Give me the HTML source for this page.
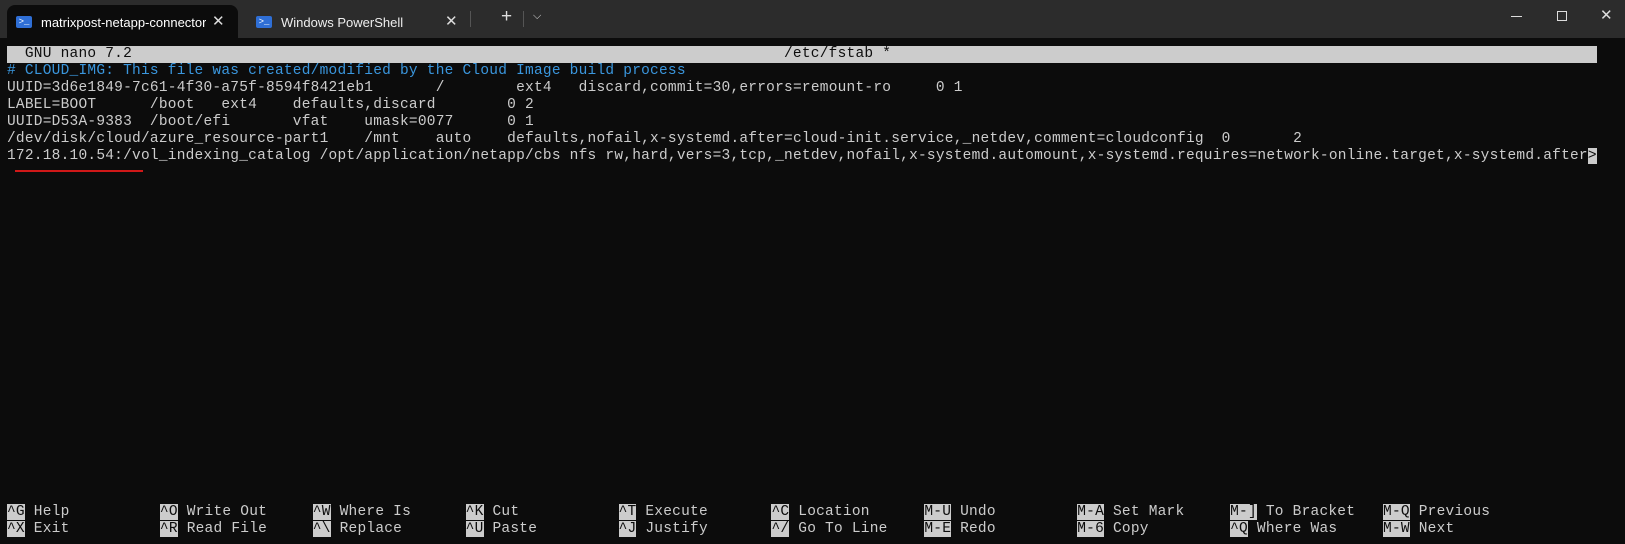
<!DOCTYPE html>
<html><head><meta charset="utf-8"><style>
*{margin:0;padding:0;box-sizing:border-box}
body{width:1625px;height:544px;background:#0c0c0c;overflow:hidden;position:relative;font-family:"Liberation Sans",sans-serif}
.tb{position:absolute;left:0;top:0;width:1625px;height:38px;background:#2c2c2c}
.tab{position:absolute;top:5px;height:33px;border-radius:8px 8px 0 0;color:#fff;font-size:13px}
.t1{left:7px;width:231px;background:#0c0c0c}
.ic{position:absolute;top:11px;width:16px;height:12px;background:#2f6fd6;border-radius:2px;color:#fff;font-size:9px;line-height:12px;text-align:center;font-family:"Liberation Mono",monospace}
.tab span.l{position:absolute;top:10px}
.x{position:absolute;top:7px;color:#ddd;font-size:15px}
.mono{font-family:"Liberation Mono",monospace;font-size:14.5px;letter-spacing:0.23px;color:#cccccc;white-space:pre;position:absolute;left:7px;line-height:17.1px}
.hdr{position:absolute;left:7px;top:45.5px;width:1590px;height:17.5px;background:#cccccc}
.k{background:#cccccc;color:#0c0c0c}
.c{display:inline-block;width:152.9px}
</style></head><body>
<div class="tb"></div>
<div class="tab t1"><div class="ic" style="left:9px">&gt;_</div><span class="l" style="left:34px;overflow:hidden;width:165px;white-space:nowrap">matrixpost-netapp-connector</span><span class="x" style="left:205px">✕</span></div>
<div class="tab" style="left:248px;width:220px"><div class="ic" style="left:8px">&gt;_</div><span class="l" style="left:33px;color:#eee">Windows PowerShell</span><span class="x" style="left:197px">✕</span></div>
<div style="position:absolute;left:470px;top:11px;width:1px;height:16px;background:#555"></div>
<div style="position:absolute;left:501px;top:6px;color:#ddd;font-size:19px">+</div>
<div style="position:absolute;left:523px;top:11px;width:1px;height:16px;background:#555"></div>
<div style="position:absolute;left:533px;top:10px;color:#ddd;font-size:11px">⌵</div>
<div style="position:absolute;left:1511px;top:16px;width:11px;height:1px;background:#ddd"></div>
<div style="position:absolute;left:1557px;top:11px;width:10px;height:10px;border:1px solid #ddd"></div>
<div style="position:absolute;left:1600px;top:6px;color:#ddd;font-size:15px">✕</div>
<div class="hdr"></div>
<div class="mono" style="top:45.5px;color:#0c0c0c">  GNU nano 7.2</div>
<div class="mono" style="top:45.5px;left:784px;color:#0c0c0c">/etc/fstab *</div>
<div class="mono" style="top:62.5px;color:#3a96dd"># CLOUD_IMG: This file was created/modified by the Cloud Image build process</div>
<div class="mono" style="top:79.6px">UUID=3d6e1849-7c61-4f30-a75f-8594f8421eb1       /        ext4   discard,commit=30,errors=remount-ro     0 1
LABEL=BOOT      /boot   ext4    defaults,discard        0 2
UUID=D53A-9383  /boot/efi       vfat    umask=0077      0 1
/dev/disk/cloud/azure_resource-part1    /mnt    auto    defaults,nofail,x-systemd.after=cloud-init.service,_netdev,comment=cloudconfig  0       2
172.18.10.54:/vol_indexing_catalog /opt/application/netapp/cbs nfs rw,hard,vers=3,tcp,_netdev,nofail,x-systemd.automount,x-systemd.requires=network-online.target,x-systemd.after<span class="k">&gt;</span></div>
<div style="position:absolute;left:15px;top:170px;width:128px;height:2px;background:#d01818"></div>
<div class="mono" style="top:503.5px"><span class="c"><span class="k">^G</span> Help</span><span class="c"><span class="k">^O</span> Write Out</span><span class="c"><span class="k">^W</span> Where Is</span><span class="c"><span class="k">^K</span> Cut</span><span class="c"><span class="k">^T</span> Execute</span><span class="c"><span class="k">^C</span> Location</span><span class="c"><span class="k">M-U</span> Undo</span><span class="c"><span class="k">M-A</span> Set Mark</span><span class="c"><span class="k">M-]</span> To Bracket</span><span class="c"><span class="k">M-Q</span> Previous</span>
<span class="c"><span class="k">^X</span> Exit</span><span class="c"><span class="k">^R</span> Read File</span><span class="c"><span class="k">^\</span> Replace</span><span class="c"><span class="k">^U</span> Paste</span><span class="c"><span class="k">^J</span> Justify</span><span class="c"><span class="k">^/</span> Go To Line</span><span class="c"><span class="k">M-E</span> Redo</span><span class="c"><span class="k">M-6</span> Copy</span><span class="c"><span class="k">^Q</span> Where Was</span><span class="c"><span class="k">M-W</span> Next</span></div>
</body></html>
